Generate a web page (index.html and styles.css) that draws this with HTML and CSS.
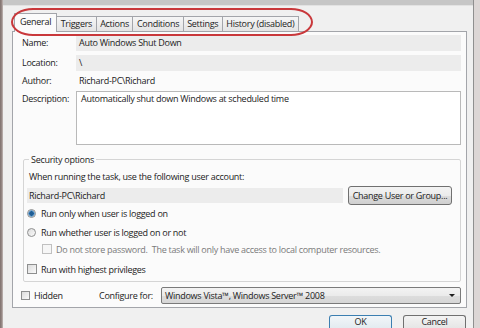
FILE: index.html
```html
<!DOCTYPE html>
<html>
<head>
<meta charset="utf-8">
<link rel="stylesheet" href="styles.css">
</head>
<body>
<div class="window">
  <div class="frame-left"></div>
  <div class="dialog">
    <div class="topbar"></div>
    <div class="tabs">
      <div class="tab active">General</div>
      <div class="tab">Triggers</div>
      <div class="tab">Actions</div>
      <div class="tab">Conditions</div>
      <div class="tab">Settings</div>
      <div class="tab">History (disabled)</div>
      <div class="ring"></div>
    </div>
    <div class="panel">
      <div class="row name-row">
        <span class="label">Name:</span>
        <div class="field ro">Auto Windows Shut Down</div>
      </div>
      <div class="row loc-row">
        <span class="label">Location:</span>
        <div class="field ro">\</div>
      </div>
      <div class="row author-row">
        <span class="label">Author:</span>
        <div class="field plain">Richard-PC\Richard</div>
      </div>
      <div class="row desc-row">
        <span class="label">Description:</span>
        <div class="field area">Automatically shut down Windows at scheduled time</div>
      </div>
      <fieldset class="group">
        <legend>Security options</legend>
        <div class="hint">When running the task, use the following user account:</div>
        <div class="account-row">
          <div class="field ro account">Richard-PC\Richard</div>
          <button class="btn change">Change User or Group...</button>
        </div>
        <label class="opt opt-r1"><input type="radio" name="run" checked><span>Run only when user is logged on</span></label>
        <label class="opt opt-r2"><input type="radio" name="run"><span>Run whether user is logged on or not</span></label>
        <label class="opt opt-sub disabled"><input type="checkbox" disabled><span>Do not store password.&nbsp; The task will only have access to local computer resources.</span></label>
        <label class="opt opt-c2"><input type="checkbox"><span>Run with highest privileges</span></label>
      </fieldset>
      <div class="bottom-row">
        <label class="opt hidden-opt"><input type="checkbox"><span>Hidden</span></label>
        <span class="cfg-label">Configure for:</span>
        <div class="combo"><span>Windows Vista™, Windows Server™ 2008</span><span class="arrow"></span></div>
      </div>
    </div>
    <div class="buttons">
      <button class="btn dlg default">OK</button>
      <button class="btn dlg">Cancel</button>
    </div>
  </div>
  <div class="frame-right"></div>
</div>
</body>
</html>
```

FILE: styles.css
```css
* { box-sizing: border-box; }
html, body { margin: 0; padding: 0; }
body {
  width: 480px;
  height: 328px;
  overflow: hidden;
  background: #f0f0f0;
  font-family: "Open Sans", "Noto Sans", sans-serif;
  font-size: 9px;
  letter-spacing: -0.28px;
  color: #222222;
}
.window {
  display: flex;
  width: 480px;
  height: 328px;
  overflow: hidden;
}
.frame-left {
  width: 3px;
  flex: none;
  background: linear-gradient(to right, #7f706d, #9c8e8b 66%, #c9c1bf);
}
.frame-right {
  width: 7px;
  flex: none;
  border-left: 1px solid #8f8f8f;
  background: #dcd6d5;
}
.dialog {
  flex: 1;
  display: flex;
  flex-direction: column;
  background: #f0f0f0;
}
.dialog > * { flex: none; }
.topbar {
  height: 6px;
  background: #c6c6c6;
  border-bottom: 1px solid #e2e2e2;
}
.tabs {
  position: relative;
  display: flex;
  align-items: flex-end;
  height: 18px;
  margin-top: 7px;
  padding-left: 11px;
}
.tab {
  height: 15px;
  padding: 0 3.5px;
  line-height: 14px;
  border: 1px solid #a3a5aa;
  border-left: none;
  border-bottom: none;
  background: linear-gradient(#f6f6f6, #e4e4e4);
  white-space: nowrap;
}
.tab.active {
  padding: 0 5px;
  line-height: 15px;
  border-left: 1px solid #a3a5aa;
  background: #fbfbfb;
  position: relative;
  z-index: 1;
  margin-bottom: -1px;
  height: 19px;
}
.ring {
  position: absolute;
  left: 8px;
  top: -5px;
  width: 302px;
  height: 28px;
  border: 2px solid #c9383b;
  border-radius: 22px / 14px;
  z-index: 2;
}
.panel {
  margin-left: 9px;
  width: 455px;
  height: 277px;
  border: 1px solid #a3a5aa;
  background: #fbfbfb;
  padding: 3px 5px 0 9px;
}
.row {
  display: flex;
  align-items: flex-start;
}
.label {
  width: 54px;
  flex: none;
  line-height: 16px;
}
.field {
  flex: 1;
  height: 16px;
  line-height: 16px;
  padding-left: 3px;
  white-space: nowrap;
}
.field.ro { background: #ececec; }
.loc-row { margin-top: 4px; }
.author-row { margin-top: 2px; }
.desc-row { margin-top: 2px; }
.field.area {
  height: 54px;
  border: 1px solid #b9b9b9;
  background: #ffffff;
  line-height: 14px;
  padding-left: 4px;
}
.group {
  margin: 9px 0 0 1px;
  padding: 6px 7px 0 3px;
  border: 1px solid #d5d5d5;
  border-radius: 2px;
  height: 128px;
}
.group legend {
  padding: 0 2px;
  margin-left: 2px;
  line-height: 11px;
}
.hint {
  margin-left: 2px;
  line-height: 12px;
}
.account-row {
  display: flex;
  align-items: center;
  margin-top: 3px;
  height: 19px;
}
.field.account {
  flex: none;
  width: 316px;
  height: 15px;
  line-height: 15px;
  padding-left: 2px;
}
.btn {
  font-family: inherit;
  font-size: 9px;
  letter-spacing: -0.28px;
  color: #222222;
  border: 1px solid #707070;
  border-radius: 3px;
  background: linear-gradient(#f3f3f3 0%, #ebebeb 50%, #dddddd 51%, #cfcfcf 100%);
  padding: 0;
  margin: 0;
}
.btn.change {
  margin-left: 5px;
  width: 104px;
  height: 19px;
}
.opt {
  display: flex;
  align-items: center;
  height: 14px;
}
.opt input {
  -webkit-appearance: none;
  appearance: none;
  margin: 0 5px 0 0;
  width: 9px;
  height: 9px;
  flex: none;
  border: 1px solid #8e8f8f;
  background: linear-gradient(135deg, #dcdcdc, #fafafa);
}
.opt input[type="radio"] {
  border-radius: 50%;
}
.opt input[type="radio"]:checked {
  background: radial-gradient(circle, #1f5d94 0 2px, #6fa6d4 2.5px 3px, #e8e8e8 3.5px);
}
.opt-r1 { margin-top: 1px; }
.opt-r2 { margin-top: 5px; }
.opt-sub { margin-top: 3px; margin-left: 15px; }
.opt-sub input { width: 10px; height: 10px; border-color: #c0c0c0; background: #f6f6f6; margin-right: 4px; }
.opt.disabled span { color: #7a7a7a; }
.opt-c2 { margin-top: 6px; }
.opt-c2 input { width: 10px; height: 10px; margin-right: 4px; }
.bottom-row {
  display: flex;
  align-items: center;
  margin-top: 5px;
  height: 17px;
}
.hidden-opt { margin-left: -1px; width: 78px; flex: none; }
.hidden-opt input { margin-right: 4px; }
.cfg-label { width: 62px; flex: none; }
.combo {
  flex: 1;
  height: 17px;
  display: flex;
  align-items: center;
  justify-content: space-between;
  padding: 0 5px 0 3px;
  border: 1px solid #7a7a7a;
  border-radius: 2px;
  background: linear-gradient(#f3f3f3 0%, #ebebeb 50%, #dddddd 51%, #d6d6d6 100%);
}
.arrow {
  width: 0;
  height: 0;
  border-left: 3px solid transparent;
  border-right: 3px solid transparent;
  border-top: 3px solid #1e1e1e;
}
.buttons {
  display: flex;
  justify-content: flex-end;
  gap: 11px;
  margin-top: 7px;
  padding-right: 7px;
}
.btn.dlg {
  width: 63px;
  height: 13px;
  display: flex;
  align-items: flex-start;
  justify-content: center;
  padding-top: 0;
  line-height: 12px;
  border-bottom: none;
  border-radius: 3px 3px 0 0;
  background: linear-gradient(#f3f3f3, #e6e6e6);
}
.btn.default {
  border-color: #3c7fb1;
  background: linear-gradient(#f2f6f9, #e3ebf0);
}
```
